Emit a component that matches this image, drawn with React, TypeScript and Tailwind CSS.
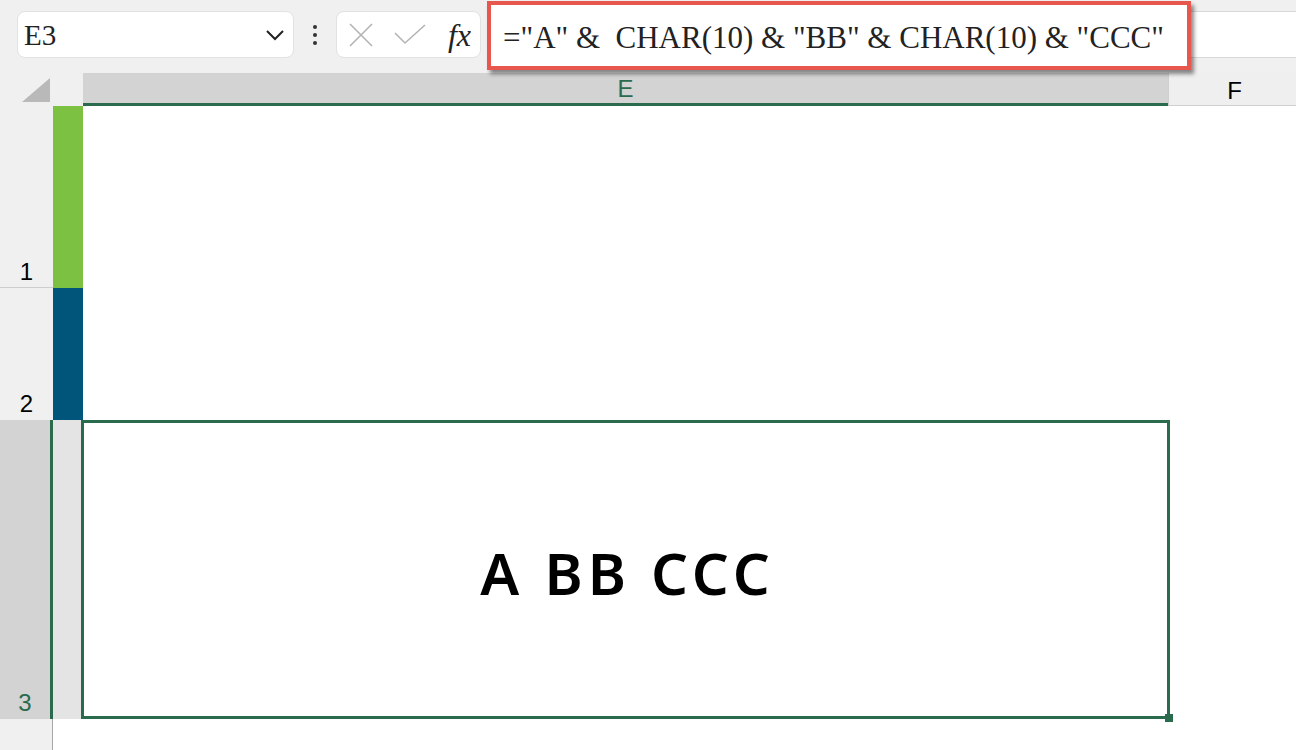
import React from 'react';

const GREEN = '#2a6b4d';

const ChevronDown = () => (
  <svg width="20" height="12" viewBox="0 0 20 12" fill="none">
    <path d="M2 2 L10 10 L18 2" stroke="#222" strokeWidth="2" />
  </svg>
);

const CrossIcon = () => (
  <svg width="26" height="26" viewBox="0 0 26 26" fill="none">
    <path d="M2 2 L24 24 M24 2 L2 24" stroke="#b4b4b4" strokeWidth="1.6" />
  </svg>
);

const CheckIcon = () => (
  <svg width="32" height="22" viewBox="0 0 32 22" fill="none">
    <path d="M1 9 L11 19 L31 1" stroke="#b4b4b4" strokeWidth="1.6" />
  </svg>
);

export default function App() {
  return (
    <div className="w-[1296px] h-[750px] bg-[#f0f0f0] flex flex-col overflow-hidden" style={{ fontFamily: '"Liberation Sans", Arial, sans-serif' }}>
      {/* Formula toolbar */}
      <div className="h-[73px] flex items-start pt-[11px] shrink-0">
        <div className="ml-[17px] w-[277px] h-[47px] bg-white rounded-lg border border-[#e2e2e2] flex items-center pl-[6px] pr-[8px]">
          <span className="flex-1 text-[29px] text-[#222] leading-none pt-[2px]" style={{ fontFamily: '"Liberation Serif", "Times New Roman", serif' }}>E3</span>
          <ChevronDown />
        </div>
        <div className="w-[42px] h-[47px] flex flex-col items-center justify-center gap-[4px]">
          <span className="w-[4px] h-[4px] bg-[#333] rounded-full" />
          <span className="w-[4px] h-[4px] bg-[#333] rounded-full" />
          <span className="w-[4px] h-[4px] bg-[#333] rounded-full" />
        </div>
        <div className="w-[145px] h-[47px] bg-white rounded-lg border border-[#e2e2e2] flex items-center pl-[11px] pr-[9px]">
          <CrossIcon />
          <span className="ml-[20px]"><CheckIcon /></span>
          <span className="ml-auto text-[32px] italic text-[#222] leading-none" style={{ fontFamily: '"Liberation Serif", "Times New Roman", serif' }}>fx</span>
        </div>
        <div className="relative flex-1 ml-[8px] h-[47px] bg-white border-y border-[#d8d8d8]">
          <div className="absolute left-[-2px] top-[-11px] w-[704px] h-[69px] border-[4px] border-[#e8574e] bg-white shadow-[3px_4px_4px_rgba(0,0,0,0.45)] flex items-center pl-[12px]">
            <span className="text-[31px] text-[#222] whitespace-pre leading-none pt-[4px]" style={{ fontFamily: '"Liberation Serif", "Times New Roman", serif' }}>
              {'="A" &  CHAR(10) & "BB" & CHAR(10) & "CCC"'}
            </span>
          </div>
        </div>
      </div>

      {/* Column header row */}
      <div className="h-[33px] flex shrink-0">
        <div className="w-[53px] h-full flex items-start justify-end pt-[5px] pr-[3px]">
          <svg width="28" height="24" viewBox="0 0 28 24">
            <polygon points="28,0 28,24 0,24" fill="#b9b9b9" />
          </svg>
        </div>
        <div className="w-[30px] h-full bg-[#f0f0f0]" />
        <div className="w-[1085px] h-full bg-[#d3d3d3] border-b-[3px] border-[#2a6b4d] flex items-center justify-center pt-[2px]">
          <span className="text-[24px]" style={{ color: GREEN }}>E</span>
        </div>
        <div className="flex-1 h-full bg-[#efefef] border-l border-b border-[#cfcfcf] flex items-center justify-center pl-[4px] pt-[3px]">
          <span className="text-[24px] text-black">F</span>
        </div>
      </div>

      {/* Row 1 */}
      <div className="h-[182px] flex shrink-0">
        <div className="w-[53px] bg-[#f0f0f0] border-b border-[#cdcdcd] flex items-end justify-center">
          <span className="text-[24px] text-black leading-none mb-[3px]">1</span>
        </div>
        <div className="w-[30px] bg-[#7cc142]" />
        <div className="flex-1 bg-white" />
      </div>

      {/* Row 2 */}
      <div className="h-[132px] flex shrink-0">
        <div className="w-[53px] bg-[#f0f0f0] flex items-end justify-center">
          <span className="text-[24px] text-black leading-none mb-[4px]">2</span>
        </div>
        <div className="w-[30px] bg-[#02557a]" />
        <div className="flex-1 bg-white" />
      </div>

      {/* Row 3 */}
      <div className="h-[299px] flex shrink-0">
        <div className="w-[53px] bg-[#d3d3d3] border-r-[3px] border-[#2a6b4d] flex items-end justify-center">
          <span className="text-[24px] leading-none mb-[4px]" style={{ color: GREEN }}>3</span>
        </div>
        <div className="w-[28px] bg-[#e4e4e4]" />
        <div className="relative w-[1089px] bg-white border-[3px] border-[#2a6b4d] flex items-center justify-center">
          <span className="text-[58px] font-semibold text-black tracking-[5px] pl-[4px] pt-[6px]" style={{ fontFamily: '"Noto Sans", "Open Sans", sans-serif' }}>
            A BB CCC
          </span>
          <span className="absolute right-[-6px] bottom-[-6px] w-[8px] h-[8px] bg-[#2a6b4d]" />
        </div>
        <div className="flex-1 bg-white" />
      </div>

      {/* Below */}
      <div className="flex-1 flex">
        <div className="w-[53px] bg-[#f0f0f0] border-r border-[#a8a8a8]" />
        <div className="flex-1 bg-white" />
      </div>
    </div>
  );
}
